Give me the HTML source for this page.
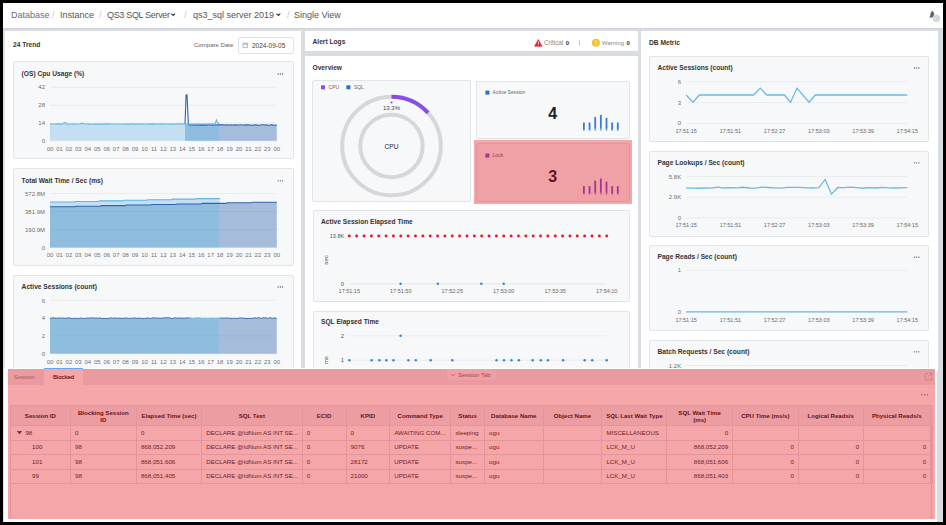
<!DOCTYPE html>
<html><head><meta charset="utf-8">
<style>
*{box-sizing:border-box;margin:0;padding:0}
html,body{width:946px;height:525px;overflow:hidden;background:#000}
body{position:relative;font-family:"Liberation Sans",sans-serif;color:#333}
.a{position:absolute}
#frame{left:3px;top:3px;width:940px;height:519px;background:#d9dde1;overflow:hidden}
#hdr{left:3px;top:3px;width:940px;height:25.5px;background:#fff;border-bottom:1.5px solid #cfd3d8}
.bc{top:10px;font-size:9px;color:#555;white-space:nowrap;line-height:10px}
.sl{color:#c4c8cc}
.panel{background:#fff}
.ptitle{font-size:6.65px;font-weight:bold;color:#333;line-height:8px;white-space:nowrap}
.card{background:#f7f8fa;border:1px solid #e2e4e8;border-radius:2px}
.ctitle{font-size:6.65px;font-weight:bold;color:#333;line-height:8px;white-space:nowrap}
.dots{font-size:7px;color:#666;font-weight:bold;letter-spacing:-0.5px}
.tx{white-space:nowrap;line-height:8px}
.th{font-size:6.1px;font-weight:bold;color:#222;text-align:center;line-height:7px;white-space:nowrap}
.td{font-size:6.2px;color:#333;line-height:7.2px;white-space:nowrap}
svg text{font-family:"Liberation Sans",sans-serif}
</style></head><body>
<div id="frame" class="a"></div>
<div id="hdr" class="a"></div>
<div class="a bc" style="left:11px;color:#6b6f75">Database</div>
<div class="a bc sl" style="left:52px">/</div>
<div class="a bc" style="left:60px">Instance</div>
<div class="a bc sl" style="left:99px">/</div>
<div class="a bc" style="left:107px;letter-spacing:-0.32px">QS3 SQL Server</div>
<div class="a bc sl" style="left:184px">/</div>
<div class="a bc" style="left:193px">qs3_sql server 2019</div>
<div class="a bc sl" style="left:287px">/</div>
<div class="a bc" style="left:294px">Single View</div>

<!-- left panel -->
<div class="a panel" style="left:4px;top:31px;width:297px;height:340px;border-left:1px solid #e6e8eb"></div>
<div class="a ptitle" style="left:13px;top:41px">24 Trend</div>
<div class="a" style="left:194px;top:42.2px;font-size:6.05px;color:#5f6268;white-space:nowrap">Compare Date</div>
<div class="a" style="left:238px;top:37px;width:56px;height:17px;border:1px solid #dfe1e5;border-radius:2px;background:#fff"></div>
<div class="a" style="left:252px;top:41.5px;font-size:6.5px;color:#444;white-space:nowrap">2024-09-05</div>

<div class="a card" style="left:13px;top:61px;width:281px;height:98px"></div>
<div class="a ctitle" style="left:21.6px;top:70px">(OS) Cpu Usage (%)</div>
<div class="a card" style="left:13px;top:168px;width:281px;height:98px"></div>
<div class="a ctitle" style="left:21.6px;top:177px">Total Wait Time / Sec (ms)</div>
<div class="a card" style="left:13px;top:275px;width:281px;height:98px"></div>
<div class="a ctitle" style="left:21.6px;top:283px">Active Sessions (count)</div>

<!-- middle -->
<div class="a panel" style="left:304.5px;top:31px;width:333.5px;height:20px"></div>
<div class="a ptitle" style="left:312.5px;top:37.5px">Alert Logs</div>
<div class="a panel" style="left:304.5px;top:56px;width:333.5px;height:320px"></div>
<div class="a ptitle" style="left:312.5px;top:64px">Overview</div>
<div class="a card" style="left:312px;top:80px;width:159px;height:122px"></div>
<div class="a card" style="left:476px;top:80.5px;width:154px;height:58px"></div>
<div class="a card" style="left:476px;top:143px;width:154px;height:59px"></div>
<div class="a card" style="left:312.5px;top:209.5px;width:317px;height:92px"></div>
<div class="a ctitle" style="left:321px;top:218px">Active Session Elapsed Time</div>
<div class="a card" style="left:312.5px;top:310.5px;width:317px;height:92px"></div>
<div class="a ctitle" style="left:321px;top:318px">SQL Elapsed Time</div>

<!-- right -->
<div class="a panel" style="left:641px;top:31px;width:296.5px;height:340px"></div>
<div class="a ptitle" style="left:649px;top:38.5px">DB Metric</div>
<div class="a card" style="left:649px;top:55.5px;width:280px;height:86px"></div>
<div class="a ctitle" style="left:657.5px;top:64px">Active Sessions (count)</div>
<div class="a card" style="left:649px;top:150.5px;width:280px;height:86px"></div>
<div class="a ctitle" style="left:657.5px;top:159px">Page Lookups / Sec (count)</div>
<div class="a card" style="left:649px;top:245px;width:280px;height:86px"></div>
<div class="a ctitle" style="left:657.5px;top:253px">Page Reads / Sec (count)</div>
<div class="a card" style="left:649px;top:339.5px;width:280px;height:86px"></div>
<div class="a ctitle" style="left:657.5px;top:348px">Batch Requests / Sec (count)</div>

<svg class="a" style="left:0;top:0" width="946" height="525" viewBox="0 0 946 525"><defs><linearGradient id="gb" x1="0" y1="0" x2="0" y2="1"><stop offset="0" stop-color="#3d7ad6"/><stop offset="0.75" stop-color="#3d7ad6"/><stop offset="1" stop-color="#a9d4e8"/></linearGradient><linearGradient id="gp" x1="0" y1="0" x2="0" y2="1"><stop offset="0" stop-color="#8a4fe0"/><stop offset="0.75" stop-color="#8a4fe0"/><stop offset="1" stop-color="#c9a6e8"/></linearGradient></defs><line x1="50" y1="87.3" x2="276.8" y2="87.3" stroke="#e4e6e9" stroke-width="0.7"/><line x1="50" y1="105.3" x2="276.8" y2="105.3" stroke="#e4e6e9" stroke-width="0.7"/><line x1="50" y1="123.1" x2="276.8" y2="123.1" stroke="#e4e6e9" stroke-width="0.7"/><line x1="50" y1="140.8" x2="276.8" y2="140.8" stroke="#e4e6e9" stroke-width="0.7"/><text x="45" y="89.46" font-size="6" fill="#6f6f6f" text-anchor="end">42</text><text x="45" y="107.46" font-size="6" fill="#6f6f6f" text-anchor="end">28</text><text x="45" y="125.26" font-size="6" fill="#6f6f6f" text-anchor="end">14</text><text x="45" y="142.96" font-size="6" fill="#6f6f6f" text-anchor="end">0</text><text x="50" y="150.62" font-size="5.9" fill="#6f6f6f" text-anchor="middle">00</text><text x="59.45" y="150.62" font-size="5.9" fill="#6f6f6f" text-anchor="middle">01</text><text x="68.9" y="150.62" font-size="5.9" fill="#6f6f6f" text-anchor="middle">02</text><text x="78.35" y="150.62" font-size="5.9" fill="#6f6f6f" text-anchor="middle">03</text><text x="87.8" y="150.62" font-size="5.9" fill="#6f6f6f" text-anchor="middle">04</text><text x="97.25" y="150.62" font-size="5.9" fill="#6f6f6f" text-anchor="middle">05</text><text x="106.7" y="150.62" font-size="5.9" fill="#6f6f6f" text-anchor="middle">06</text><text x="116.15" y="150.62" font-size="5.9" fill="#6f6f6f" text-anchor="middle">07</text><text x="125.6" y="150.62" font-size="5.9" fill="#6f6f6f" text-anchor="middle">08</text><text x="135.05" y="150.62" font-size="5.9" fill="#6f6f6f" text-anchor="middle">09</text><text x="144.5" y="150.62" font-size="5.9" fill="#6f6f6f" text-anchor="middle">10</text><text x="153.95" y="150.62" font-size="5.9" fill="#6f6f6f" text-anchor="middle">11</text><text x="163.4" y="150.62" font-size="5.9" fill="#6f6f6f" text-anchor="middle">12</text><text x="172.85" y="150.62" font-size="5.9" fill="#6f6f6f" text-anchor="middle">13</text><text x="182.3" y="150.62" font-size="5.9" fill="#6f6f6f" text-anchor="middle">14</text><text x="191.75" y="150.62" font-size="5.9" fill="#6f6f6f" text-anchor="middle">15</text><text x="201.2" y="150.62" font-size="5.9" fill="#6f6f6f" text-anchor="middle">16</text><text x="210.65" y="150.62" font-size="5.9" fill="#6f6f6f" text-anchor="middle">17</text><text x="220.1" y="150.62" font-size="5.9" fill="#6f6f6f" text-anchor="middle">18</text><text x="229.55" y="150.62" font-size="5.9" fill="#6f6f6f" text-anchor="middle">19</text><text x="239" y="150.62" font-size="5.9" fill="#6f6f6f" text-anchor="middle">20</text><text x="248.45" y="150.62" font-size="5.9" fill="#6f6f6f" text-anchor="middle">21</text><text x="257.9" y="150.62" font-size="5.9" fill="#6f6f6f" text-anchor="middle">22</text><text x="267.35" y="150.62" font-size="5.9" fill="#6f6f6f" text-anchor="middle">23</text><text x="276.8" y="150.62" font-size="5.9" fill="#6f6f6f" text-anchor="middle">00</text><polygon points="50,140.8 50,123.92 51.5,124.01 53,123.96 54.5,124.03 56,124.04 57.5,123.87 59,123.85 60.5,124.1 62,123.93 63.5,123.31 65,122.35 66.5,123.99 68,124.1 69.5,123.99 71,124.04 72.5,123.9 74,124.04 75.5,124.11 77,124.01 78.5,124.07 80,124.05 81.5,123.1 83,123.6 84.5,124.03 86,123.94 87.5,123.86 89,124.11 90.5,123.99 92,124.07 93.5,124.11 95,124.06 96.5,124.13 98,123.97 99.5,124.09 101,123.98 102.5,124.13 104,124.11 105.5,123.88 107,123.89 108.5,123.92 110,124.14 111.5,123.98 113,124.04 114.5,123.94 116,124 117.5,123.97 119,123.96 120.5,124.03 122,124.03 123.5,124.12 125,124.05 126.5,124.13 128,124.11 129.5,124.15 131,124.05 132.5,123.9 134,124.11 135.5,124.14 137,124.12 138.5,124.02 140,124.06 141.5,123.91 143,124.1 144.5,124.02 146,123.94 147.5,123.87 149,124.11 150.5,124.15 152,123.88 153.5,124.09 155,123.97 156.5,123.9 158,123.94 159.5,124.08 161,124.11 162.5,123.86 164,124.03 165.5,123.86 167,124.07 168.5,123.95 170,124.11 171.5,124.14 173,124 174.5,124.15 176,123.94 177.5,123.87 179,124.03 180.5,123.86 182,123.91 183.5,123.97 185,124.03 185,124 185,140.8" fill="#c4dff1"/><rect x="185" y="124.3" width="34.9" height="16.5" fill="#8fbde0"/><polygon points="219.9,140.8 219.9,124.8 220,124.9 221.5,124.87 223,124.91 224.5,125.07 226,124.86 227.5,124.91 229,125.19 230.5,124.67 232,125.05 233.5,125.16 235,124.87 236.5,124.81 238,125.21 239.5,124.82 241,124.78 242.5,124.95 244,125.14 245.5,124.72 247,124.88 248.5,124.88 250,125.23 251.5,124.96 253,125.25 254.5,124.77 256,124.89 257.5,125.11 259,125.27 260.5,124.97 262,124.81 263.5,124.73 265,125.02 266.5,124.78 268,125.21 269.5,125.24 271,124.78 272.5,124.85 274,125.22 276.8,125.1 276.8,140.8" fill="#a6bcdb"/><polyline points="185,124.2 186.1,94.8 187,94.8 188.4,124.6 190,124.94 191.5,125.06 193,124.66 194.5,125.08 196,125.09 197.5,124.69 199,125.09 200.5,124.98 202,125.13 203.5,124.9 205,125.14 206.5,125.17 208,124.67 209.5,124.69 211,125.12 212.5,125.32 214,124.83 215.5,124.97 217,125.06 218.5,124.87 220,124.9 221.5,124.87 223,124.91 224.5,125.07 226,124.86 227.5,124.91 229,125.19 230.5,124.67 232,125.05 233.5,125.16 235,124.87 236.5,124.81 238,125.21 239.5,124.82 241,124.78 242.5,124.95 244,125.14 245.5,124.72 247,124.88 248.5,124.88 250,125.23 251.5,124.96 253,125.25 254.5,124.77 256,124.89 257.5,125.11 259,125.27 260.5,124.97 262,124.81 263.5,124.73 265,125.02 266.5,124.78 268,125.21 269.5,125.24 271,124.78 272.5,124.85 274,125.22 276.8,125.1" fill="none" stroke="#2f65ab" stroke-width="1.1" stroke-linejoin="round"/><polyline points="50,123.92 51.5,124.01 53,123.96 54.5,124.03 56,124.04 57.5,123.87 59,123.85 60.5,124.1 62,123.93 63.5,123.31 65,122.35 66.5,123.99 68,124.1 69.5,123.99 71,124.04 72.5,123.9 74,124.04 75.5,124.11 77,124.01 78.5,124.07 80,124.05 81.5,123.1 83,123.6 84.5,124.03 86,123.94 87.5,123.86 89,124.11 90.5,123.99 92,124.07 93.5,124.11 95,124.06 96.5,124.13 98,123.97 99.5,124.09 101,123.98 102.5,124.13 104,124.11 105.5,123.88 107,123.89 108.5,123.92 110,124.14 111.5,123.98 113,124.04 114.5,123.94 116,124 117.5,123.97 119,123.96 120.5,124.03 122,124.03 123.5,124.12 125,124.05 126.5,124.13 128,124.11 129.5,124.15 131,124.05 132.5,123.9 134,124.11 135.5,124.14 137,124.12 138.5,124.02 140,124.06 141.5,123.91 143,124.1 144.5,124.02 146,123.94 147.5,123.87 149,124.11 150.5,124.15 152,123.88 153.5,124.09 155,123.97 156.5,123.9 158,123.94 159.5,124.08 161,124.11 162.5,123.86 164,124.03 165.5,123.86 167,124.07 168.5,123.95 170,124.11 171.5,124.14 173,124 174.5,124.15 176,123.94 177.5,123.87 179,124.03 180.5,123.86 182,123.91 183.5,123.97 185,124.03 186.5,123.9 188,123.86 189.5,124.11 191,123.94 192.5,124.14 194,124.12 195.5,123.96 197,123.99 198.5,124.01 200,124.04 201.5,124.03 203,124.02 204.5,124.04 206,124.13 207.5,124 209,123.98 210.5,124.07 212,123.92 213.5,123.94 215,124.14 216.5,120.06 218,123.67 219.9,123.85" fill="none" stroke="#64b4e4" stroke-width="1.1"/><line x1="50" y1="193.5" x2="276.8" y2="193.5" stroke="#e4e6e9" stroke-width="0.7"/><line x1="50" y1="211.5" x2="276.8" y2="211.5" stroke="#e4e6e9" stroke-width="0.7"/><line x1="50" y1="229.5" x2="276.8" y2="229.5" stroke="#e4e6e9" stroke-width="0.7"/><line x1="50" y1="247.4" x2="276.8" y2="247.4" stroke="#e4e6e9" stroke-width="0.7"/><text x="45" y="195.66" font-size="6" fill="#6f6f6f" text-anchor="end">572.8M</text><text x="45" y="213.66" font-size="6" fill="#6f6f6f" text-anchor="end">381.9M</text><text x="45" y="231.66" font-size="6" fill="#6f6f6f" text-anchor="end">190.9M</text><text x="45" y="249.56" font-size="6" fill="#6f6f6f" text-anchor="end">0</text><text x="50" y="257.42" font-size="5.9" fill="#6f6f6f" text-anchor="middle">00</text><text x="59.45" y="257.42" font-size="5.9" fill="#6f6f6f" text-anchor="middle">01</text><text x="68.9" y="257.42" font-size="5.9" fill="#6f6f6f" text-anchor="middle">02</text><text x="78.35" y="257.42" font-size="5.9" fill="#6f6f6f" text-anchor="middle">03</text><text x="87.8" y="257.42" font-size="5.9" fill="#6f6f6f" text-anchor="middle">04</text><text x="97.25" y="257.42" font-size="5.9" fill="#6f6f6f" text-anchor="middle">05</text><text x="106.7" y="257.42" font-size="5.9" fill="#6f6f6f" text-anchor="middle">06</text><text x="116.15" y="257.42" font-size="5.9" fill="#6f6f6f" text-anchor="middle">07</text><text x="125.6" y="257.42" font-size="5.9" fill="#6f6f6f" text-anchor="middle">08</text><text x="135.05" y="257.42" font-size="5.9" fill="#6f6f6f" text-anchor="middle">09</text><text x="144.5" y="257.42" font-size="5.9" fill="#6f6f6f" text-anchor="middle">10</text><text x="153.95" y="257.42" font-size="5.9" fill="#6f6f6f" text-anchor="middle">11</text><text x="163.4" y="257.42" font-size="5.9" fill="#6f6f6f" text-anchor="middle">12</text><text x="172.85" y="257.42" font-size="5.9" fill="#6f6f6f" text-anchor="middle">13</text><text x="182.3" y="257.42" font-size="5.9" fill="#6f6f6f" text-anchor="middle">14</text><text x="191.75" y="257.42" font-size="5.9" fill="#6f6f6f" text-anchor="middle">15</text><text x="201.2" y="257.42" font-size="5.9" fill="#6f6f6f" text-anchor="middle">16</text><text x="210.65" y="257.42" font-size="5.9" fill="#6f6f6f" text-anchor="middle">17</text><text x="220.1" y="257.42" font-size="5.9" fill="#6f6f6f" text-anchor="middle">18</text><text x="229.55" y="257.42" font-size="5.9" fill="#6f6f6f" text-anchor="middle">19</text><text x="239" y="257.42" font-size="5.9" fill="#6f6f6f" text-anchor="middle">20</text><text x="248.45" y="257.42" font-size="5.9" fill="#6f6f6f" text-anchor="middle">21</text><text x="257.9" y="257.42" font-size="5.9" fill="#6f6f6f" text-anchor="middle">22</text><text x="267.35" y="257.42" font-size="5.9" fill="#6f6f6f" text-anchor="middle">23</text><text x="276.8" y="257.42" font-size="5.9" fill="#6f6f6f" text-anchor="middle">00</text><polygon points="50,247.4 50,202 74.27,202 75.17,201.43 98.54,201.43 99.44,200.87 122.81,200.87 123.71,200.3 147.09,200.3 147.99,199.73 171.36,199.73 172.26,199.17 195.63,199.17 196.53,198.6 219.9,198.6 219.9,247.4" fill="#c4dff1"/><polygon points="50,247.4 50,206.8 75.2,206.8 76.1,206.23 100.4,206.23 101.3,205.65 125.6,205.65 126.5,205.07 150.8,205.07 151.7,204.5 176,204.5 176.9,203.93 201.2,203.93 202.1,203.35 219.9,203.35 219.9,247.4" fill="#8fbde0"/><polygon points="219.9,247.4 219.9,203.35 226.4,203.35 227.3,202.77 251.6,202.77 252.5,202.2 276.8,202.2 276.8,247.4" fill="#a6bcdb"/><line x1="50.0" y1="211.5" x2="276.8" y2="211.5" stroke="#000" stroke-opacity="0.05" stroke-width="0.7"/><line x1="50.0" y1="229.5" x2="276.8" y2="229.5" stroke="#000" stroke-opacity="0.05" stroke-width="0.7"/><polyline points="50,206.8 75.2,206.8 76.1,206.23 100.4,206.23 101.3,205.65 125.6,205.65 126.5,205.07 150.8,205.07 151.7,204.5 176,204.5 176.9,203.93 201.2,203.93 202.1,203.35 226.4,203.35 227.3,202.77 251.6,202.77 252.5,202.2 276.8,202.2" fill="none" stroke="#2f65ab" stroke-width="1.1"/><polyline points="50,202 74.27,202 75.17,201.43 98.54,201.43 99.44,200.87 122.81,200.87 123.71,200.3 147.09,200.3 147.99,199.73 171.36,199.73 172.26,199.17 195.63,199.17 196.53,198.6 219.9,198.6" fill="none" stroke="#64b4e4" stroke-width="1.1"/><line x1="50" y1="300.4" x2="276.8" y2="300.4" stroke="#e4e6e9" stroke-width="0.7"/><line x1="50" y1="318" x2="276.8" y2="318" stroke="#e4e6e9" stroke-width="0.7"/><line x1="50" y1="335.9" x2="276.8" y2="335.9" stroke="#e4e6e9" stroke-width="0.7"/><line x1="50" y1="353.7" x2="276.8" y2="353.7" stroke="#e4e6e9" stroke-width="0.7"/><text x="45" y="302.56" font-size="6" fill="#6f6f6f" text-anchor="end">6</text><text x="45" y="320.16" font-size="6" fill="#6f6f6f" text-anchor="end">4</text><text x="45" y="338.06" font-size="6" fill="#6f6f6f" text-anchor="end">2</text><text x="45" y="355.86" font-size="6" fill="#6f6f6f" text-anchor="end">0</text><text x="50" y="363.52" font-size="5.9" fill="#6f6f6f" text-anchor="middle">00</text><text x="59.45" y="363.52" font-size="5.9" fill="#6f6f6f" text-anchor="middle">01</text><text x="68.9" y="363.52" font-size="5.9" fill="#6f6f6f" text-anchor="middle">02</text><text x="78.35" y="363.52" font-size="5.9" fill="#6f6f6f" text-anchor="middle">03</text><text x="87.8" y="363.52" font-size="5.9" fill="#6f6f6f" text-anchor="middle">04</text><text x="97.25" y="363.52" font-size="5.9" fill="#6f6f6f" text-anchor="middle">05</text><text x="106.7" y="363.52" font-size="5.9" fill="#6f6f6f" text-anchor="middle">06</text><text x="116.15" y="363.52" font-size="5.9" fill="#6f6f6f" text-anchor="middle">07</text><text x="125.6" y="363.52" font-size="5.9" fill="#6f6f6f" text-anchor="middle">08</text><text x="135.05" y="363.52" font-size="5.9" fill="#6f6f6f" text-anchor="middle">09</text><text x="144.5" y="363.52" font-size="5.9" fill="#6f6f6f" text-anchor="middle">10</text><text x="153.95" y="363.52" font-size="5.9" fill="#6f6f6f" text-anchor="middle">11</text><text x="163.4" y="363.52" font-size="5.9" fill="#6f6f6f" text-anchor="middle">12</text><text x="172.85" y="363.52" font-size="5.9" fill="#6f6f6f" text-anchor="middle">13</text><text x="182.3" y="363.52" font-size="5.9" fill="#6f6f6f" text-anchor="middle">14</text><text x="191.75" y="363.52" font-size="5.9" fill="#6f6f6f" text-anchor="middle">15</text><text x="201.2" y="363.52" font-size="5.9" fill="#6f6f6f" text-anchor="middle">16</text><text x="210.65" y="363.52" font-size="5.9" fill="#6f6f6f" text-anchor="middle">17</text><text x="220.1" y="363.52" font-size="5.9" fill="#6f6f6f" text-anchor="middle">18</text><text x="229.55" y="363.52" font-size="5.9" fill="#6f6f6f" text-anchor="middle">19</text><text x="239" y="363.52" font-size="5.9" fill="#6f6f6f" text-anchor="middle">20</text><text x="248.45" y="363.52" font-size="5.9" fill="#6f6f6f" text-anchor="middle">21</text><text x="257.9" y="363.52" font-size="5.9" fill="#6f6f6f" text-anchor="middle">22</text><text x="267.35" y="363.52" font-size="5.9" fill="#6f6f6f" text-anchor="middle">23</text><text x="276.8" y="363.52" font-size="5.9" fill="#6f6f6f" text-anchor="middle">00</text><polygon points="50,353.7 50,318.48 51.6,318.06 53.2,317.87 54.8,318.01 56.4,318.46 58,317.99 59.6,318.06 61.2,318.13 62.8,318.13 64.4,318.12 66,318.58 67.6,317.89 69.2,317.75 70.8,318.6 72.4,318.54 74,318.64 75.6,318.14 77.2,318.61 78.8,318.58 80.4,317.95 82,318.42 83.6,318.5 85.2,318.35 86.8,318.22 88.4,318.01 90,318.06 91.6,317.95 93.2,317.81 94.8,318.28 96.4,318.01 98,318.48 99.6,317.79 101.2,318.56 102.8,318.37 104.4,318.58 106,318.56 107.6,318.56 109.2,318.27 110.8,317.76 112.4,318.42 114,317.9 115.6,318.02 117.2,318.35 118.8,318.22 120.4,318.12 122,318.6 123.6,318.3 125.2,318.06 126.8,317.98 128.4,318.53 130,318.18 131.6,318.45 133.2,318.07 134.8,317.93 136.4,318.23 138,318.49 139.6,317.9 141.2,318.46 142.8,318.58 144.4,318.48 146,318.49 147.6,317.76 149.2,318.32 150.8,318.53 152.4,317.79 154,317.99 155.6,317.99 157.2,318.22 158.8,318.13 160.4,318.18 162,318.45 163.6,317.75 165.2,317.8 166.8,317.86 168.4,317.86 170,317.81 171.6,318.63 173.2,318.52 174.8,317.83 176.4,318.2 178,318.03 179.6,318.03 181.2,318.07 182.8,318.33 184.4,318.28 186,318.07 187.6,317.92 189.2,318.05 190.8,317.86 192.4,318.25 194,318.39 195.6,318.09 197.2,317.82 198.8,317.91 200.4,318.09 202,318.29 203.6,318.45 205.2,318.09 206.8,318.47 208.4,318.31 210,318.14 211.6,318.09 213.2,318.2 214.8,318.38 216.4,318.13 218,318.37 219.6,318.16 219.9,318.5 219.9,353.7" fill="#8fbde0"/><polygon points="219.9,353.7 219.9,318.5 221.2,317.97 222.8,318.23 224.4,318.38 226,317.81 227.6,318.13 229.2,318.13 230.8,318.54 232.4,318.59 234,318.09 235.6,318.56 237.2,318.46 238.8,317.99 240.4,318.17 242,317.86 243.6,318.48 245.2,318.35 246.8,318.55 248.4,318.46 250,318.35 251.6,318.41 253.2,318.26 254.8,317.84 256.4,318.28 258,317.75 259.6,317.88 261.2,318.45 262.8,317.79 264.4,317.83 266,317.84 267.6,318.54 269.2,317.91 270.8,317.77 272.4,318.51 274,317.86 276.8,318.51 276.8,353.7" fill="#a6bcdb"/><line x1="50.0" y1="335.9" x2="276.8" y2="335.9" stroke="#000" stroke-opacity="0.05" stroke-width="0.7"/><polyline points="50,318.48 51.6,318.06 53.2,317.87 54.8,318.01 56.4,318.46 58,317.99 59.6,318.06 61.2,318.13 62.8,318.13 64.4,318.12 66,318.58 67.6,317.89 69.2,317.75 70.8,318.6 72.4,318.54 74,318.64 75.6,318.14 77.2,318.61 78.8,318.58 80.4,317.95 82,318.42 83.6,318.5 85.2,318.35 86.8,318.22 88.4,318.01 90,318.06 91.6,317.95 93.2,317.81 94.8,318.28 96.4,318.01 98,318.48 99.6,317.79 101.2,318.56 102.8,318.37 104.4,318.58 106,318.56 107.6,318.56 109.2,318.27 110.8,317.76 112.4,318.42 114,317.9 115.6,318.02 117.2,318.35 118.8,318.22 120.4,318.12 122,318.6 123.6,318.3 125.2,318.06 126.8,317.98 128.4,318.53 130,318.18 131.6,318.45 133.2,318.07 134.8,317.93 136.4,318.23 138,318.49 139.6,317.9 141.2,318.46 142.8,318.58 144.4,318.48 146,318.49 147.6,317.76 149.2,318.32 150.8,318.53 152.4,317.79 154,317.99 155.6,317.99 157.2,318.22 158.8,318.13 160.4,318.18 162,318.45 163.6,317.75 165.2,317.8 166.8,317.86 168.4,317.86 170,317.81 171.6,318.63 173.2,318.52 174.8,317.83 176.4,318.2 178,318.03 179.6,318.03 181.2,318.07 182.8,318.33 184.4,318.28 186,318.07 187.6,317.92 189.2,318.05" fill="none" stroke="#2f65ab" stroke-width="0.9"/><polyline points="189.2,318.05 190.8,317.86 192.4,318.25 194,318.39 195.6,318.09 197.2,317.82 198.8,317.91 200.4,318.09 202,318.29 203.6,318.45 205.2,318.09 206.8,318.47 208.4,318.31 210,318.14 211.6,318.09 213.2,318.2 214.8,318.38 216.4,318.13 218,318.37 219.6,318.16" fill="none" stroke="#64b4e4" stroke-width="0.9"/><polyline points="219.6,318.16 221.2,317.97 222.8,318.23 224.4,318.38 226,317.81 227.6,318.13 229.2,318.13 230.8,318.54 232.4,318.59 234,318.09 235.6,318.56 237.2,318.46 238.8,317.99 240.4,318.17 242,317.86 243.6,318.48 245.2,318.35 246.8,318.55 248.4,318.46 250,318.35 251.6,318.41 253.2,318.26 254.8,317.84 256.4,318.28 258,317.75 259.6,317.88 261.2,318.45 262.8,317.79 264.4,317.83 266,317.84 267.6,318.54 269.2,317.91 270.8,317.77 272.4,318.51 274,317.86 276.8,318.51" fill="none" stroke="#2f65ab" stroke-width="0.9"/><circle cx="391.5" cy="146.0" r="49.3" fill="none" stroke="#d5d7da" stroke-width="4"/><circle cx="391.5" cy="146.0" r="31.2" fill="none" stroke="#d5d7da" stroke-width="4"/><path d="M391.5,96.7 A49.3,49.3 0 0 1 428.07,112.94" fill="none" stroke="#8a4fe0" stroke-width="4"/><circle cx="391.5" cy="102.5" r="1.1" fill="#8a4fe0"/><text x="391.5" y="110" font-size="6" fill="#444" text-anchor="middle">13.3%</text><text x="391.5" y="148.7" font-size="6.6" fill="#222" text-anchor="middle">CPU</text><rect x="321" y="85.3" width="4" height="4" fill="#8a4fe0"/><text x="328.6" y="89.1" font-size="5" fill="#666">CPU</text><rect x="346.4" y="85.3" width="4" height="4" fill="#2f6fc7"/><text x="353.9" y="89.1" font-size="5" fill="#666">SQL</text><rect x="485.4" y="90.6" width="4" height="4" fill="#2f6fc7"/><text x="492.6" y="94.3" font-size="5" fill="#666">Active Session</text><text x="552.8" y="118.6" font-size="16" font-weight="bold" fill="#222" text-anchor="middle">4</text><rect x="583" y="122.5" width="1.8" height="8.5" fill="url(#gb)"/><rect x="588.65" y="122.5" width="1.8" height="8.5" fill="url(#gb)"/><rect x="594.3" y="117" width="1.8" height="14" fill="url(#gb)"/><rect x="599.95" y="115" width="1.8" height="16" fill="url(#gb)"/><rect x="605.6" y="118" width="1.8" height="13" fill="url(#gb)"/><rect x="611.25" y="122.5" width="1.8" height="8.5" fill="url(#gb)"/><rect x="616.9" y="122.5" width="1.8" height="8.5" fill="url(#gb)"/><rect x="485.4" y="153.6" width="4" height="4" fill="#8a4fe0"/><text x="492.6" y="157.3" font-size="5" fill="#666">Lock</text><text x="552.8" y="182.2" font-size="16" font-weight="bold" fill="#222" text-anchor="middle">3</text><rect x="583" y="186.1" width="1.8" height="8.5" fill="url(#gp)"/><rect x="588.65" y="186.1" width="1.8" height="8.5" fill="url(#gp)"/><rect x="594.3" y="180.6" width="1.8" height="14" fill="url(#gp)"/><rect x="599.95" y="178.6" width="1.8" height="16" fill="url(#gp)"/><rect x="605.6" y="181.6" width="1.8" height="13" fill="url(#gp)"/><rect x="611.25" y="186.1" width="1.8" height="8.5" fill="url(#gp)"/><rect x="616.9" y="186.1" width="1.8" height="8.5" fill="url(#gp)"/><text x="344.3" y="238" font-size="5.6" fill="#555" text-anchor="end">13.8K</text><text x="344" y="285.8" font-size="5.9" fill="#555" text-anchor="end">0</text><line x1="349.3" y1="283.8" x2="606.7" y2="283.8" stroke="#dfe2e6" stroke-width="0.8"/><circle cx="349.3" cy="236" r="1.45" fill="#f0141e"/><circle cx="356.65" cy="236" r="1.45" fill="#f0141e"/><circle cx="364.01" cy="236" r="1.45" fill="#f0141e"/><circle cx="371.36" cy="236" r="1.45" fill="#f0141e"/><circle cx="378.72" cy="236" r="1.45" fill="#f0141e"/><circle cx="386.07" cy="236" r="1.45" fill="#f0141e"/><circle cx="393.43" cy="236" r="1.45" fill="#f0141e"/><circle cx="400.78" cy="236" r="1.45" fill="#f0141e"/><circle cx="408.13" cy="236" r="1.45" fill="#f0141e"/><circle cx="415.49" cy="236" r="1.45" fill="#f0141e"/><circle cx="422.84" cy="236" r="1.45" fill="#f0141e"/><circle cx="430.2" cy="236" r="1.45" fill="#f0141e"/><circle cx="437.55" cy="236" r="1.45" fill="#f0141e"/><circle cx="444.91" cy="236" r="1.45" fill="#f0141e"/><circle cx="452.26" cy="236" r="1.45" fill="#f0141e"/><circle cx="459.61" cy="236" r="1.45" fill="#f0141e"/><circle cx="466.97" cy="236" r="1.45" fill="#f0141e"/><circle cx="474.32" cy="236" r="1.45" fill="#f0141e"/><circle cx="481.68" cy="236" r="1.45" fill="#f0141e"/><circle cx="489.03" cy="236" r="1.45" fill="#f0141e"/><circle cx="496.39" cy="236" r="1.45" fill="#f0141e"/><circle cx="503.74" cy="236" r="1.45" fill="#f0141e"/><circle cx="511.09" cy="236" r="1.45" fill="#f0141e"/><circle cx="518.45" cy="236" r="1.45" fill="#f0141e"/><circle cx="525.8" cy="236" r="1.45" fill="#f0141e"/><circle cx="533.16" cy="236" r="1.45" fill="#f0141e"/><circle cx="540.51" cy="236" r="1.45" fill="#f0141e"/><circle cx="547.87" cy="236" r="1.45" fill="#f0141e"/><circle cx="555.22" cy="236" r="1.45" fill="#f0141e"/><circle cx="562.57" cy="236" r="1.45" fill="#f0141e"/><circle cx="569.93" cy="236" r="1.45" fill="#f0141e"/><circle cx="577.28" cy="236" r="1.45" fill="#f0141e"/><circle cx="584.64" cy="236" r="1.45" fill="#f0141e"/><circle cx="591.99" cy="236" r="1.45" fill="#f0141e"/><circle cx="599.35" cy="236" r="1.45" fill="#f0141e"/><circle cx="606.7" cy="236" r="1.45" fill="#f0141e"/><circle cx="400.6" cy="283.8" r="1.25" fill="#3a86d0"/><circle cx="437.8" cy="283.8" r="1.25" fill="#3a86d0"/><circle cx="481.3" cy="283.8" r="1.25" fill="#3a86d0"/><circle cx="503.7" cy="283.8" r="1.25" fill="#3a86d0"/><text x="349.3" y="292.58" font-size="5.5" fill="#666" text-anchor="middle">17:51:15</text><text x="400.78" y="292.58" font-size="5.5" fill="#666" text-anchor="middle">17:51:50</text><text x="452.26" y="292.58" font-size="5.5" fill="#666" text-anchor="middle">17:52:25</text><text x="503.74" y="292.58" font-size="5.5" fill="#666" text-anchor="middle">17:53:00</text><text x="555.22" y="292.58" font-size="5.5" fill="#666" text-anchor="middle">17:53:35</text><text x="606.7" y="292.58" font-size="5.5" fill="#666" text-anchor="middle">17:54:10</text><text transform="translate(328.0,260) rotate(-90)" font-size="6.2" fill="#555" text-anchor="middle">sec</text><text x="344" y="337.8" font-size="5.9" fill="#555" text-anchor="end">2</text><text x="344" y="362.2" font-size="5.9" fill="#555" text-anchor="end">1</text><line x1="349.3" y1="335.8" x2="606.7" y2="335.8" stroke="#e4e6e9" stroke-width="0.7"/><line x1="349.3" y1="360.2" x2="606.7" y2="360.2" stroke="#e4e6e9" stroke-width="0.7"/><circle cx="400.6" cy="335.8" r="1.25" fill="#3a86d0"/><circle cx="349.3" cy="360.2" r="1.25" fill="#3a86d0"/><circle cx="371.6" cy="360.2" r="1.25" fill="#3a86d0"/><circle cx="379.4" cy="360.2" r="1.25" fill="#3a86d0"/><circle cx="386.4" cy="360.2" r="1.25" fill="#3a86d0"/><circle cx="393.5" cy="360.2" r="1.25" fill="#3a86d0"/><circle cx="408.4" cy="360.2" r="1.25" fill="#3a86d0"/><circle cx="415.8" cy="360.2" r="1.25" fill="#3a86d0"/><circle cx="430.7" cy="360.2" r="1.25" fill="#3a86d0"/><circle cx="452.3" cy="360.2" r="1.25" fill="#3a86d0"/><circle cx="496.6" cy="360.2" r="1.25" fill="#3a86d0"/><circle cx="504" cy="360.2" r="1.25" fill="#3a86d0"/><circle cx="511.4" cy="360.2" r="1.25" fill="#3a86d0"/><circle cx="518.9" cy="360.2" r="1.25" fill="#3a86d0"/><circle cx="532.7" cy="360.2" r="1.25" fill="#3a86d0"/><circle cx="540.8" cy="360.2" r="1.25" fill="#3a86d0"/><circle cx="547.9" cy="360.2" r="1.25" fill="#3a86d0"/><circle cx="563.1" cy="360.2" r="1.25" fill="#3a86d0"/><circle cx="584.7" cy="360.2" r="1.25" fill="#3a86d0"/><circle cx="592.2" cy="360.2" r="1.25" fill="#3a86d0"/><circle cx="606.7" cy="360.2" r="1.25" fill="#3a86d0"/><text transform="translate(328.0,360.2) rotate(-90)" font-size="6.2" fill="#555" text-anchor="middle">ms</text><line x1="686.1" y1="81.8" x2="907.3" y2="81.8" stroke="#e4e6e9" stroke-width="0.7"/><line x1="686.1" y1="102.5" x2="907.3" y2="102.5" stroke="#e4e6e9" stroke-width="0.7"/><line x1="686.1" y1="123.3" x2="907.3" y2="123.3" stroke="#e4e6e9" stroke-width="0.7"/><text x="681.2" y="83.96" font-size="6" fill="#6f6f6f" text-anchor="end">6</text><text x="681.2" y="104.66" font-size="6" fill="#6f6f6f" text-anchor="end">3</text><text x="681.2" y="125.46" font-size="6" fill="#6f6f6f" text-anchor="end">0</text><text x="686.1" y="132.68" font-size="5.5" fill="#666" text-anchor="middle">17:51:15</text><text x="730.34" y="132.68" font-size="5.5" fill="#666" text-anchor="middle">17:51:51</text><text x="774.58" y="132.68" font-size="5.5" fill="#666" text-anchor="middle">17:52:27</text><text x="818.82" y="132.68" font-size="5.5" fill="#666" text-anchor="middle">17:53:03</text><text x="863.06" y="132.68" font-size="5.5" fill="#666" text-anchor="middle">17:53:39</text><text x="907.3" y="132.68" font-size="5.5" fill="#666" text-anchor="middle">17:54:15</text><polyline points="686.1,95 693,102.2 699.3,95 753.5,95 760.3,88.1 766.7,95 784.5,95 790.6,102.2 796.9,88.1 809,102.2 815.3,95 907.3,95" fill="none" stroke="#6cb9e4" stroke-width="1.3"/><line x1="686.1" y1="176.4" x2="907.3" y2="176.4" stroke="#e4e6e9" stroke-width="0.7"/><line x1="686.1" y1="197.1" x2="907.3" y2="197.1" stroke="#e4e6e9" stroke-width="0.7"/><line x1="686.1" y1="217.9" x2="907.3" y2="217.9" stroke="#e4e6e9" stroke-width="0.7"/><text x="681.2" y="178.56" font-size="6" fill="#6f6f6f" text-anchor="end">5.8K</text><text x="681.2" y="199.26" font-size="6" fill="#6f6f6f" text-anchor="end">2.9K</text><text x="681.2" y="220.06" font-size="6" fill="#6f6f6f" text-anchor="end">0</text><text x="686.1" y="226.88" font-size="5.5" fill="#666" text-anchor="middle">17:51:15</text><text x="730.34" y="226.88" font-size="5.5" fill="#666" text-anchor="middle">17:51:51</text><text x="774.58" y="226.88" font-size="5.5" fill="#666" text-anchor="middle">17:52:27</text><text x="818.82" y="226.88" font-size="5.5" fill="#666" text-anchor="middle">17:53:03</text><text x="863.06" y="226.88" font-size="5.5" fill="#666" text-anchor="middle">17:53:39</text><text x="907.3" y="226.88" font-size="5.5" fill="#666" text-anchor="middle">17:54:15</text><polyline points="686.1,187.91 692.42,188.1 698.74,188.24 705.06,187.79 711.38,188.06 717.7,187.14 724.02,188.02 730.34,187.71 736.66,187.96 742.98,187.23 749.3,188 755.62,188.22 761.94,187.17 768.26,187.49 774.58,187.78 780.9,188.09 787.22,187.39 793.54,187.32 799.86,187.4 806.18,187.84 812.5,188 818.82,187.57 825.14,179.4 831.46,194.2 837.78,187.52 844.1,187.6 850.42,187.2 856.74,187.7 863.06,188.27 869.38,187.6 875.7,188 882.02,187.29 888.34,187.93 894.66,188.01 900.98,187.91 907.3,187.72" fill="none" stroke="#6cb9e4" stroke-width="1.3"/><line x1="686.1" y1="270.2" x2="907.3" y2="270.2" stroke="#e4e6e9" stroke-width="0.7"/><line x1="686.1" y1="311.9" x2="907.3" y2="311.9" stroke="#e4e6e9" stroke-width="0.7"/><text x="681.2" y="272.36" font-size="6" fill="#6f6f6f" text-anchor="end">1</text><text x="681.2" y="314.06" font-size="6" fill="#6f6f6f" text-anchor="end">0</text><text x="686.1" y="321.58" font-size="5.5" fill="#666" text-anchor="middle">17:51:15</text><text x="730.34" y="321.58" font-size="5.5" fill="#666" text-anchor="middle">17:51:51</text><text x="774.58" y="321.58" font-size="5.5" fill="#666" text-anchor="middle">17:52:27</text><text x="818.82" y="321.58" font-size="5.5" fill="#666" text-anchor="middle">17:53:03</text><text x="863.06" y="321.58" font-size="5.5" fill="#666" text-anchor="middle">17:53:39</text><text x="907.3" y="321.58" font-size="5.5" fill="#666" text-anchor="middle">17:54:15</text><line x1="686.1" y1="311.9" x2="907.3" y2="311.9" stroke="#6cb9e4" stroke-width="1.2"/><line x1="686.1" y1="365.5" x2="907.3" y2="365.5" stroke="#e4e6e9" stroke-width="0.7"/><text x="681.2" y="367.66" font-size="6" fill="#6f6f6f" text-anchor="end">1.2K</text><path d="M171.3,13.6 L173.2,15.5 L175.1,13.6" fill="none" stroke="#333" stroke-width="1.1"/><path d="M276.5,13.6 L278.4,15.5 L280.3,13.6" fill="none" stroke="#333" stroke-width="1.1"/><path d="M929,17.6 C929.8,16.8 930.2,16 930.4,14.4 C930.6,12.6 931.2,11.2 932.3,10.9 C933.4,11.2 934,12.6 934.2,14.4 C934.4,16 934.8,16.8 935.4,17.6 Z" fill="#5f646c"/><circle cx="936.5" cy="18.4" r="3.7" fill="#c5cad1" stroke="#fff" stroke-width="0.5"/><circle cx="936.5" cy="18.4" r="1.5" fill="none" stroke="#f4f5f7" stroke-width="0.9"/><circle cx="936.5" cy="18.4" r="0.5" fill="#aab0b8"/><rect x="243" y="43" width="4.6" height="4.6" fill="none" stroke="#888" stroke-width="0.6" rx="0.4"/><line x1="243" y1="44.2" x2="247.6" y2="44.2" stroke="#888" stroke-width="0.6"/><circle cx="278.2" cy="74" r="0.65" fill="#555"/><circle cx="280.4" cy="74" r="0.65" fill="#555"/><circle cx="282.6" cy="74" r="0.65" fill="#555"/><circle cx="278.2" cy="180.8" r="0.65" fill="#555"/><circle cx="280.4" cy="180.8" r="0.65" fill="#555"/><circle cx="282.6" cy="180.8" r="0.65" fill="#555"/><circle cx="278.2" cy="287" r="0.65" fill="#555"/><circle cx="280.4" cy="287" r="0.65" fill="#555"/><circle cx="282.6" cy="287" r="0.65" fill="#555"/><circle cx="914.5" cy="68" r="0.65" fill="#555"/><circle cx="916.7" cy="68" r="0.65" fill="#555"/><circle cx="918.9" cy="68" r="0.65" fill="#555"/><circle cx="914.5" cy="162.8" r="0.65" fill="#555"/><circle cx="916.7" cy="162.8" r="0.65" fill="#555"/><circle cx="918.9" cy="162.8" r="0.65" fill="#555"/><circle cx="914.5" cy="257.2" r="0.65" fill="#555"/><circle cx="916.7" cy="257.2" r="0.65" fill="#555"/><circle cx="918.9" cy="257.2" r="0.65" fill="#555"/><circle cx="914.5" cy="351.8" r="0.65" fill="#555"/><circle cx="916.7" cy="351.8" r="0.65" fill="#555"/><circle cx="918.9" cy="351.8" r="0.65" fill="#555"/><path d="M538.3,39.6 L542,46.2 L534.6,46.2 Z" fill="#e8262e" stroke="#e8262e" stroke-width="0.7" stroke-linejoin="round"/><rect x="537.95" y="41.4" width="0.75" height="2.6" fill="#fff"/><rect x="537.95" y="44.6" width="0.75" height="0.8" fill="#fff"/><text x="544" y="44.9" font-size="6.3" fill="#888">Critical</text><text x="565.8" y="45" font-size="6" font-weight="bold" fill="#333">0</text><rect x="579.3" y="40.3" width="0.6" height="5" fill="#999"/><circle cx="595.9" cy="42.8" r="4" fill="#f5c02d"/><rect x="595.55" y="40.2" width="0.75" height="3" fill="#fff"/><rect x="595.55" y="44.3" width="0.75" height="0.8" fill="#fff"/><text x="602" y="45" font-size="6" fill="#888">Warning</text><text x="626.6" y="45" font-size="6" font-weight="bold" fill="#333">0</text></svg>
<!-- bottom panel -->
<div class="a" style="left:3px;top:368px;width:934px;height:154px;background:#fff"></div><div class="a" style="left:3px;top:368px;width:1px;height:154px;background:#dfe2e6"></div><div class="a" style="left:8px;top:369px;width:927px;height:15.5px;background:#efeff1"></div><div class="a" style="left:43.9px;top:368px;width:38.9px;height:16.5px;background:#fff;border-top:1px solid #6aa7ea"></div><div class="a tx" style="left:13.7px;top:372.7px;font-size:5.95px;color:#8a8d92">Session</div><div class="a tx" style="left:52.9px;top:372.7px;font-size:5.95px;color:#222;-webkit-text-stroke:0.15px #222">Blocked</div><div class="a" style="left:446.5px;top:369.3px;width:49px;height:10.7px;background:#f6f6f8;border-radius:0 0 3px 3px"></div><svg class="a" style="left:449.5px;top:372.5px" width="6" height="4" viewBox="0 0 6 4"><path d="M1.2,1.2 L3,2.9 L4.8,1.2" fill="none" stroke="#f0506a" stroke-width="0.7"/></svg><div class="a tx" style="left:458px;top:371px;font-size:6px;color:#777">Session Tab</div><svg class="a" style="left:924px;top:372px" width="9" height="9" viewBox="0 0 9 9"><path d="M4,1.5 H1.2 V8 H7.5 V5" fill="none" stroke="#b9bcc0" stroke-width="0.8"/><path d="M5,1 H8 V4 M8,1 L4.3,4.7" fill="none" stroke="#b9bcc0" stroke-width="0.8"/></svg><svg class="a" style="left:920px;top:393px" width="10" height="4" viewBox="0 0 10 4"><circle cx="1.6" cy="1.8" r="0.8" fill="#888"/><circle cx="4.6" cy="1.8" r="0.8" fill="#888"/><circle cx="7.6" cy="1.8" r="0.8" fill="#888"/></svg><div class="a" style="left:10.4px;top:405.5px;width:922px;height:113px;border-left:1px solid #e1e3e6;border-right:1px solid #e1e3e6"></div><div class="a" style="left:10.4px;top:405.5px;width:922px;height:20.0px;background:#f1f2f4"></div><div class="a" style="left:10.4px;top:405.0px;width:922px;height:1px;background:#e3e5e8"></div><div class="a" style="left:10.4px;top:425.0px;width:922px;height:1px;background:#e3e5e8"></div><div class="a" style="left:10.4px;top:439.5px;width:922px;height:1px;background:#e3e5e8"></div><div class="a" style="left:10.4px;top:454.1px;width:922px;height:1px;background:#e3e5e8"></div><div class="a" style="left:10.4px;top:468.7px;width:922px;height:1px;background:#e3e5e8"></div><div class="a" style="left:10.4px;top:483.1px;width:922px;height:1px;background:#e3e5e8"></div><div class="a" style="left:9.9px;top:405.5px;width:1px;height:78.10000000000002px;background:#e3e5e8"></div><div class="a" style="left:69.9px;top:405.5px;width:1px;height:78.10000000000002px;background:#e3e5e8"></div><div class="a" style="left:135.8px;top:405.5px;width:1px;height:78.10000000000002px;background:#e3e5e8"></div><div class="a" style="left:201.1px;top:405.5px;width:1px;height:78.10000000000002px;background:#e3e5e8"></div><div class="a" style="left:301.6px;top:405.5px;width:1px;height:78.10000000000002px;background:#e3e5e8"></div><div class="a" style="left:345.5px;top:405.5px;width:1px;height:78.10000000000002px;background:#e3e5e8"></div><div class="a" style="left:389.1px;top:405.5px;width:1px;height:78.10000000000002px;background:#e3e5e8"></div><div class="a" style="left:450.4px;top:405.5px;width:1px;height:78.10000000000002px;background:#e3e5e8"></div><div class="a" style="left:483.9px;top:405.5px;width:1px;height:78.10000000000002px;background:#e3e5e8"></div><div class="a" style="left:542.7px;top:405.5px;width:1px;height:78.10000000000002px;background:#e3e5e8"></div><div class="a" style="left:601.3px;top:405.5px;width:1px;height:78.10000000000002px;background:#e3e5e8"></div><div class="a" style="left:666.4px;top:405.5px;width:1px;height:78.10000000000002px;background:#e3e5e8"></div><div class="a" style="left:731.9px;top:405.5px;width:1px;height:78.10000000000002px;background:#e3e5e8"></div><div class="a" style="left:797.7px;top:405.5px;width:1px;height:78.10000000000002px;background:#e3e5e8"></div><div class="a" style="left:862.8px;top:405.5px;width:1px;height:78.10000000000002px;background:#e3e5e8"></div><div class="a" style="left:929.8px;top:405.5px;width:1px;height:78.10000000000002px;background:#e3e5e8"></div><div class="a" style="left:931.9px;top:405.5px;width:1px;height:78.10000000000002px;background:#e3e5e8"></div><div class="a th" style="left:10.4px;top:412.20px;width:60.00px">Session ID</div><div class="a th" style="left:70.4px;top:408.50px;width:65.90px">Blocking Session<br>ID</div><div class="a th" style="left:136.3px;top:412.20px;width:65.30px">Elapsed Time (sec)</div><div class="a th" style="left:201.6px;top:412.20px;width:100.50px">SQL Text</div><div class="a th" style="left:302.1px;top:412.20px;width:43.90px">ECID</div><div class="a th" style="left:346px;top:412.20px;width:43.60px">KPID</div><div class="a th" style="left:389.6px;top:412.20px;width:61.30px">Command Type</div><div class="a th" style="left:450.9px;top:412.20px;width:33.50px">Status</div><div class="a th" style="left:484.4px;top:412.20px;width:58.80px">Database Name</div><div class="a th" style="left:543.2px;top:412.20px;width:58.60px">Object Name</div><div class="a th" style="left:601.8px;top:412.20px;width:65.10px">SQL Last Wait Type</div><div class="a th" style="left:666.9px;top:408.50px;width:65.50px">SQL Wait Time<br>(ms)</div><div class="a th" style="left:732.4px;top:412.20px;width:65.80px">CPU Time (ms/s)</div><div class="a th" style="left:798.2px;top:412.20px;width:65.10px">Logical Reads/s</div><div class="a th" style="left:863.3px;top:412.20px;width:67.00px">Physical Reads/s</div><div class="a td" style="left:25.40px;top:428.75px">98</div><div class="a td" style="left:75.00px;top:428.75px">0</div><div class="a td" style="left:140.90px;top:428.75px">0</div><div class="a td" style="left:206.20px;top:428.75px">DECLARE @IdNum AS INT SE...</div><div class="a td" style="left:306.70px;top:428.75px">0</div><div class="a td" style="left:350.60px;top:428.75px">0</div><div class="a td" style="left:394.20px;top:428.75px">AWAITING COM...</div><div class="a td" style="left:455.50px;top:428.75px">sleeping</div><div class="a td" style="left:489.00px;top:428.75px">ogu</div><div class="a td" style="left:606.40px;top:428.75px">MISCELLANEOUS</div><div class="a td" style="left:666.9px;top:428.75px;width:61.30px;text-align:right">0</div><div class="a td" style="left:32.10px;top:443.30px">100</div><div class="a td" style="left:75.00px;top:443.30px">98</div><div class="a td" style="left:140.90px;top:443.30px">868,052.209</div><div class="a td" style="left:206.20px;top:443.30px">DECLARE @IdNum AS INT SE...</div><div class="a td" style="left:306.70px;top:443.30px">0</div><div class="a td" style="left:350.60px;top:443.30px">9076</div><div class="a td" style="left:394.20px;top:443.30px">UPDATE</div><div class="a td" style="left:455.50px;top:443.30px">suspe...</div><div class="a td" style="left:489.00px;top:443.30px">ogu</div><div class="a td" style="left:606.40px;top:443.30px">LCK_M_U</div><div class="a td" style="left:666.9px;top:443.30px;width:61.30px;text-align:right">868,052,209</div><div class="a td" style="left:732.4px;top:443.30px;width:61.60px;text-align:right">0</div><div class="a td" style="left:798.2px;top:443.30px;width:60.90px;text-align:right">0</div><div class="a td" style="left:863.3px;top:443.30px;width:62.80px;text-align:right">0</div><div class="a td" style="left:32.10px;top:457.90px">101</div><div class="a td" style="left:75.00px;top:457.90px">98</div><div class="a td" style="left:140.90px;top:457.90px">868,051.606</div><div class="a td" style="left:206.20px;top:457.90px">DECLARE @IdNum AS INT SE...</div><div class="a td" style="left:306.70px;top:457.90px">0</div><div class="a td" style="left:350.60px;top:457.90px">28172</div><div class="a td" style="left:394.20px;top:457.90px">UPDATE</div><div class="a td" style="left:455.50px;top:457.90px">suspe...</div><div class="a td" style="left:489.00px;top:457.90px">ogu</div><div class="a td" style="left:606.40px;top:457.90px">LCK_M_U</div><div class="a td" style="left:666.9px;top:457.90px;width:61.30px;text-align:right">868,051,606</div><div class="a td" style="left:732.4px;top:457.90px;width:61.60px;text-align:right">0</div><div class="a td" style="left:798.2px;top:457.90px;width:60.90px;text-align:right">0</div><div class="a td" style="left:863.3px;top:457.90px;width:62.80px;text-align:right">0</div><div class="a td" style="left:32.10px;top:472.40px">99</div><div class="a td" style="left:75.00px;top:472.40px">98</div><div class="a td" style="left:140.90px;top:472.40px">868,051.405</div><div class="a td" style="left:206.20px;top:472.40px">DECLARE @IdNum AS INT SE...</div><div class="a td" style="left:306.70px;top:472.40px">0</div><div class="a td" style="left:350.60px;top:472.40px">21000</div><div class="a td" style="left:394.20px;top:472.40px">UPDATE</div><div class="a td" style="left:455.50px;top:472.40px">suspe...</div><div class="a td" style="left:489.00px;top:472.40px">ogu</div><div class="a td" style="left:606.40px;top:472.40px">LCK_M_U</div><div class="a td" style="left:666.9px;top:472.40px;width:61.30px;text-align:right">868,051,403</div><div class="a td" style="left:732.4px;top:472.40px;width:61.60px;text-align:right">0</div><div class="a td" style="left:798.2px;top:472.40px;width:60.90px;text-align:right">0</div><div class="a td" style="left:863.3px;top:472.40px;width:62.80px;text-align:right">0</div><svg class="a" style="left:15.5px;top:429.5px" width="7" height="6" viewBox="0 0 7 6"><path d="M0.8,1 H6.2 L3.5,4.6 Z" fill="#555"/></svg>

<!-- overlays -->
<div class="a" style="left:474.2px;top:140.4px;width:158.2px;height:64.1px;background:rgba(226,0,10,0.35)"></div>
<div class="a" style="left:8px;top:369px;width:927.3px;height:149.5px;background:rgba(226,0,10,0.35)"></div>
</body></html>
